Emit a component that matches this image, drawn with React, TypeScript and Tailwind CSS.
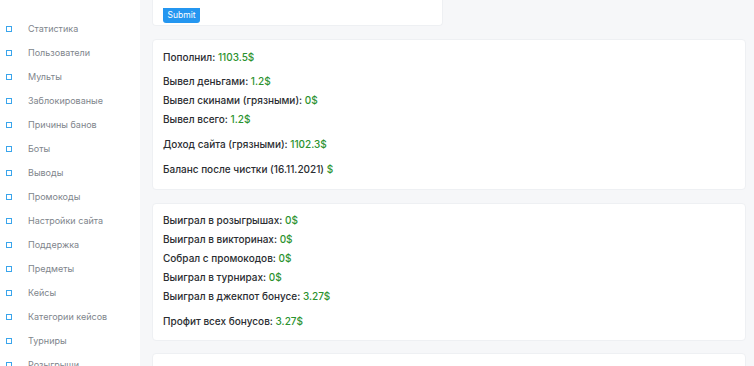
import React from "react";

const menu = [
  "Статистика",
  "Пользователи",
  "Мульты",
  "Заблокированые",
  "Причины банов",
  "Боты",
  "Выводы",
  "Промокоды",
  "Настройки сайта",
  "Поддержка",
  "Предметы",
  "Кейсы",
  "Категории кейсов",
  "Турниры",
  "Розыгрыши",
];

function Row({ label, value, className = "" }: { label: string; value: string; className?: string }) {
  return (
    <p className={`h-[19px] leading-[19px] ${className}`}>
      {label} <span className="text-[#2b922e]">{value}</span>
    </p>
  );
}

export default function App() {
  return (
    <div
      className="flex h-[366px] w-[754px] overflow-hidden bg-[#f6f7f9]"
      style={{ fontFamily: "Inter, 'Noto Sans', sans-serif" }}
    >
      <aside className="w-[140px] flex-shrink-0 bg-white pt-[17px]">
        {menu.map((item) => (
          <div key={item} className="flex h-[24px] items-center">
            <span className="ml-[6px] h-[6px] w-[6px] border-[1.5px] border-[#3aa5ec]" />
            <span className="ml-[16px] text-[9px] text-[#80858c]">{item}</span>
          </div>
        ))}
      </aside>

      <main className="flex-grow pl-[12px] pr-[8px]">
        <div className="mb-[13px] h-[26px] w-[291px] rounded-b border-x border-b border-[#eef0f3] bg-white pl-[10px]">
          <button className="h-[15px] w-[37px] rounded-b-[3px] bg-[#2496f0] text-[8.5px] leading-[15px] text-white">
            Submit
          </button>
        </div>

        <div className="mb-[13px] h-[151px] rounded-sm border border-[#eef0f3] bg-white px-[10px] pt-[8px] text-[10px] font-medium text-[#2a2d31]">
          <Row label="Пополнил:" value="1103.5$" />
          <Row label="Вывел деньгами:" value="1.2$" className="mt-[5px]" />
          <Row label="Вывел скинами (грязными):" value="0$" />
          <Row label="Вывел всего:" value="1.2$" />
          <Row label="Доход сайта (грязными):" value="1102.3$" className="mt-[6px]" />
          <Row label="Баланс после чистки (16.11.2021)" value="$" className="mt-[6px]" />
        </div>

        <div className="mb-[12px] h-[138px] rounded-sm border border-[#eef0f3] bg-white px-[10px] pt-[7px] text-[10px] font-medium text-[#2a2d31]">
          <Row label="Выиграл в розыгрышах:" value="0$" />
          <Row label="Выиграл в викторинах:" value="0$" />
          <Row label="Собрал с промокодов:" value="0$" />
          <Row label="Выиграл в турнирах:" value="0$" />
          <Row label="Выиграл в джекпот бонусе:" value="3.27$" />
          <Row label="Профит всех бонусов:" value="3.27$" className="mt-[6px]" />
        </div>

        <div className="h-[60px] rounded-sm border border-[#eef0f3] bg-white" />
      </main>
    </div>
  );
}
